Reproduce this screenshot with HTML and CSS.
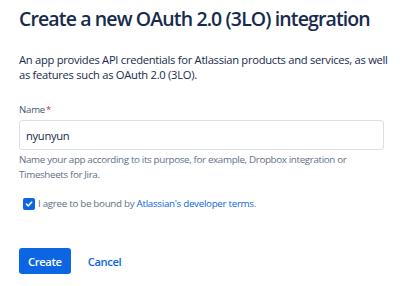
FILE: index.html
```html
<!DOCTYPE html>
<html>
<head>
<meta charset="utf-8">
<link rel="stylesheet" href="styles.css">
</head>
<body>
<div class="page">
  <h1 class="title">Create a new OAuth 2.0 (3LO) integration</h1>
  <p class="intro">An app provides API credentials for Atlassian products and services, as well as features such as OAuth 2.0 (3LO).</p>
  <label class="label" for="name">Name<span class="req">*</span></label>
  <div class="input">nyunyun</div>
  <p class="helper">Name your app according to its purpose, for example, Dropbox integration or Timesheets for Jira.</p>
  <div class="agree">
    <span class="checkbox">
      <svg width="8" height="8" viewBox="0 0 8 8"><path d="M1.4 4.2 L3.2 5.9 L6.6 2.2" fill="none" stroke="#fff" stroke-width="1.6" stroke-linecap="round" stroke-linejoin="round"/></svg>
    </span>
    <span class="agree-text">I agree to be bound by <a class="link" href="#">Atlassian's developer terms</a>.</span>
  </div>
  <div class="actions">
    <button class="btn btn-primary">Create</button>
    <button class="btn btn-subtle">Cancel</button>
  </div>
</div>
</body>
</html>
```
FILE: styles.css
```css
html, body {
  margin: 0;
  padding: 0;
  background: #ffffff;
}
body {
  font-family: "Open Sans", "Noto Sans", sans-serif;
  color: #172b4d;
}
.page {
  width: 372px;
  padding: 7px 0 0 19px;
  display: flex;
  flex-direction: column;
  align-items: flex-start;
}
.title {
  margin: 0;
  font-size: 19.5px;
  line-height: 24px;
  font-weight: 600;
  letter-spacing: -0.88px;
  color: #172b4d;
  white-space: nowrap;
}
.intro {
  margin: 21px 0 0 0;
  font-size: 11.2px;
  line-height: 15px;
  letter-spacing: -0.28px;
  color: #172b4d;
}
.label {
  margin-top: 22px;
  font-size: 9.6px;
  line-height: 12px;
  letter-spacing: -0.2px;
  color: #44546f;
}
.req {
  color: #c9372c;
  margin-left: 1px;
}
.input {
  margin-top: 4px;
  box-sizing: border-box;
  width: 365px;
  height: 30px;
  border: 1px solid #dcdfe4;
  border-radius: 3px;
  padding: 0 6px;
  display: flex;
  align-items: center;
  font-size: 11.2px;
  letter-spacing: -0.3px;
  color: #172b4d;
}
.helper {
  margin: 2px 0 0 0;
  font-size: 9.8px;
  line-height: 15px;
  letter-spacing: -0.35px;
  color: #626f86;
}
.agree {
  margin-top: 14px;
  display: flex;
  align-items: center;
  gap: 3px;
  padding-left: 4px;
}
.checkbox {
  width: 12px;
  height: 12px;
  box-sizing: border-box;
  border-radius: 2px;
  background: #0c66e4;
  display: flex;
  align-items: center;
  justify-content: center;
}
.agree-text {
  font-size: 9.8px;
  line-height: 15px;
  letter-spacing: -0.3px;
  color: #626f86;
}
.link {
  color: #0c66e4;
  text-decoration: none;
}
.actions {
  margin-top: 37px;
  display: flex;
  gap: 8px;
}
.btn {
  font-family: inherit;
  border: none;
  border-radius: 3px;
  height: 26px;
  padding: 0 9px;
  font-size: 11.2px;
  font-weight: 600;
  letter-spacing: -0.35px;
  cursor: pointer;
}
.btn-primary {
  background: #0c66e4;
  color: #ffffff;
}
.btn-subtle {
  background: transparent;
  color: #0c66e4;
}
```
